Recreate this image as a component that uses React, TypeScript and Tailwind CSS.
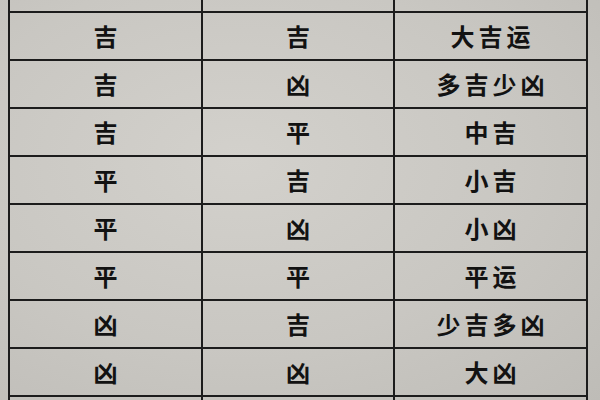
const rows: [string, string, string][] = [
  ["", "", "运势"],
  ["吉", "吉", "大吉运"],
  ["吉", "凶", "多吉少凶"],
  ["吉", "平", "中吉"],
  ["平", "吉", "小吉"],
  ["平", "凶", "小凶"],
  ["平", "平", "平运"],
  ["凶", "吉", "少吉多凶"],
  ["凶", "凶", "大凶"],
  ["", "", ""],
];

export default function App() {
  return (
    <div className="w-[600px] h-[400px] overflow-hidden bg-[#cac8c3] bg-[radial-gradient(ellipse_at_40%_40%,#d3d1cc_0%,#c9c7c2_55%,#bebcb7_100%)] font-['Noto_Sans_CJK_SC','Noto_Sans',sans-serif] text-[#121212]">
      <div className="ml-[8px] -mt-[35px] w-[580px] border-x-2 border-[#1c1c1c]">
        {rows.map((r, i) => (
          <div
            key={i}
            className="grid grid-cols-[193px_192px_1fr] h-[48px] border-b-2 border-[#1c1c1c]"
          >
            <div className="flex items-center justify-center border-r-2 border-[#1c1c1c] text-[24px] font-semibold">
              {r[0]}
            </div>
            <div className="flex items-center justify-center border-r-2 border-[#1c1c1c] text-[24px] font-semibold">
              {r[1]}
            </div>
            <div
              className={
                i === 0
                  ? "flex items-center justify-center pl-[4px] pb-[6px] text-[24px] font-semibold tracking-[4px]"
                  : "flex items-center justify-center pl-[4px] text-[24px] font-semibold tracking-[4px]"
              }
            >
              {r[2]}
            </div>
          </div>
        ))}
      </div>
    </div>
  );
}
